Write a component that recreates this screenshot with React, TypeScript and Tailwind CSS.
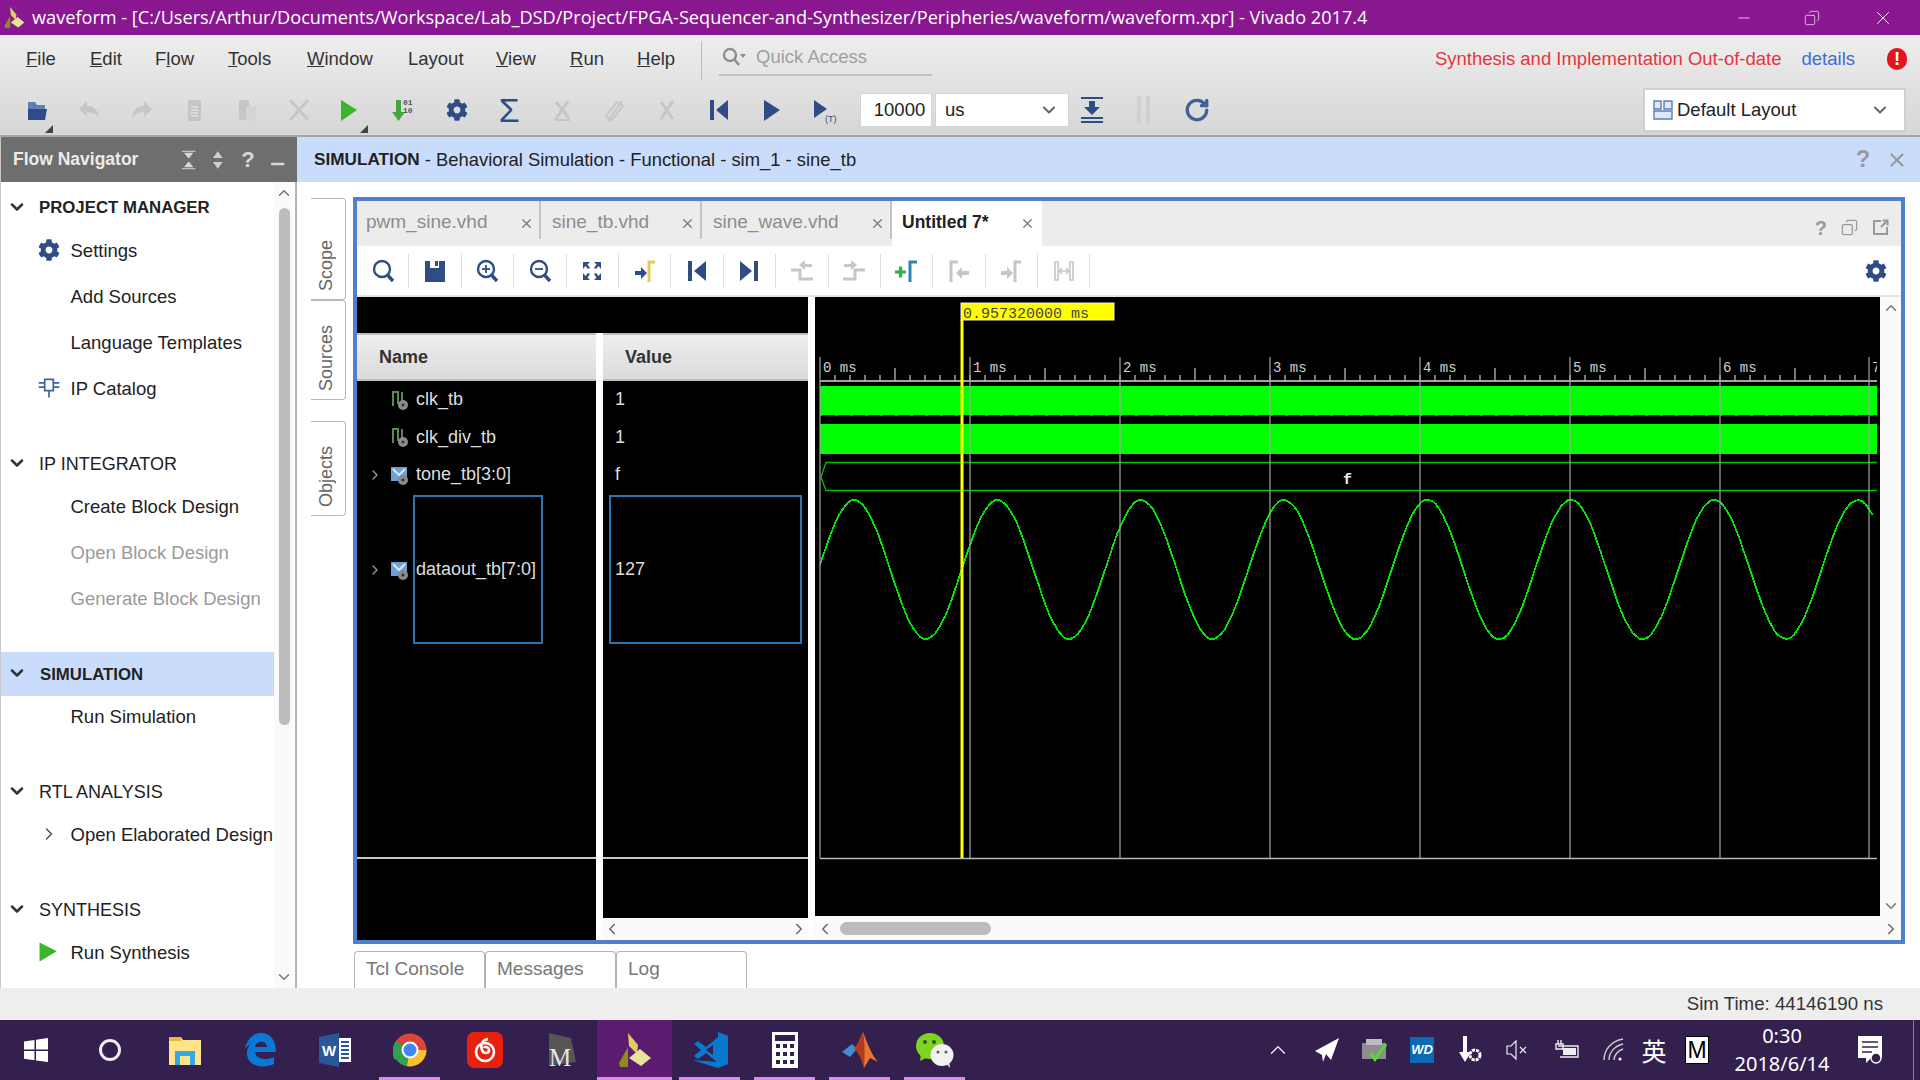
import React from "react";
import { ChevronDown, ChevronLeft, ChevronRight, ChevronUp, Minus, RotateCw, X, Copy } from "lucide-react";
import { FaCog } from "react-icons/fa";

const NAVY = "#2f4d85";
const FAINT = "#c6c6c6";

type IconProps = { children: React.ReactNode; size?: number };

function Ico({ children, size = 28 }: Readonly<IconProps>) {
  return (
    <svg width={size} height={size} viewBox="0 0 28 28" className="shrink-0">
      {children}
    </svg>
  );
}

const FirstFrame = () => (
  <Ico>
    <rect x="5" y="4" width="4" height="20" fill={NAVY} />
    <path d="M23 4 L11 14 L23 24 Z" fill={NAVY} />
  </Ico>
);
const LastFrame = () => (
  <Ico>
    <rect x="19" y="4" width="4" height="20" fill={NAVY} />
    <path d="M5 4 L17 14 L5 24 Z" fill={NAVY} />
  </Ico>
);
const Magnifier = ({ sign }: { sign?: "+" | "-" }) => (
  <Ico>
    <circle cx="13" cy="12" r="8" fill="none" stroke={NAVY} strokeWidth="2.4" />
    <path d="M18.5 18 L24 24" stroke={NAVY} strokeWidth="3.4" />
    {sign && <path d="M9 12 H17" stroke={NAVY} strokeWidth="1.8" />}
    {sign === "+" && <path d="M13 8 V16" stroke={NAVY} strokeWidth="1.8" />}
  </Ico>
);

const mainTools: React.ReactNode[] = [
  <Ico key="open">
    <path d="M5 6 H12 L14 9 H22 V23 H5 Z" fill="#5d7fb5" />
    <path d="M5 13 H24 L22 24 H5 Z" fill={NAVY} />
  </Ico>,
  <Ico key="undo">
    <path d="M4 13 L12 5 V10 C19 10 23 14 24 22 C21 18 17 16 12 16 V21 Z" fill={FAINT} />
  </Ico>,
  <Ico key="redo">
    <path d="M24 13 L16 5 V10 C9 10 5 14 4 22 C7 18 11 16 16 16 V21 Z" fill={FAINT} />
  </Ico>,
  <Ico key="copy">
    <rect x="8" y="4" width="13" height="21" fill={FAINT} />
    <path d="M11 11 H18 M11 14 H18 M11 17 H18 M11 20 H18" stroke="#eee" strokeWidth="1" />
  </Ico>,
  <Ico key="paste">
    <rect x="6" y="4" width="10" height="20" fill={FAINT} />
    <rect x="13" y="10" width="10" height="15" fill="#d4d4d4" />
  </Ico>,
  <Ico key="cut">
    <path d="M5 4 L23 24 M23 4 L5 24" stroke={FAINT} strokeWidth="3" />
  </Ico>,
  <Ico key="run">
    <path d="M3 4 L19 14 L3 25 Z" fill="#3bb52b" />
  </Ico>,
  <Ico key="bitstream">
    <path d="M6 4 H11 V16 H15 L8.5 25 L2 16 H6 Z" fill="#47a53f" />
    <text x="13" y="9" fontSize="8" fontFamily="Liberation Mono" fontWeight="700" fill="#555">01</text>
    <text x="13" y="17" fontSize="8" fontFamily="Liberation Mono" fontWeight="700" fill="#555">10</text>
  </Ico>,
  <FaCog key="cog" size={22} color={NAVY} />,
  <span key="sigma" className="text-[34px] leading-none font-['Liberation_Sans'] text-[#2f4d85]">Σ</span>,
  <Ico key="x1">
    <path d="M8 6 L21 22 M20 5 L8 23" stroke={FAINT} strokeWidth="3" />
    <path d="M6 24 H22" stroke={FAINT} strokeWidth="2" />
  </Ico>,
  <Ico key="x2">
    <path d="M6 20 L17 6 L23 10 L12 24 Z" fill="none" stroke={FAINT} strokeWidth="2" />
    <path d="M8 25 L22 5" stroke={FAINT} strokeWidth="2" />
  </Ico>,
  <Ico key="x3">
    <path d="M8 6 L20 23 M20 5 L8 23" stroke={FAINT} strokeWidth="3" />
  </Ico>,
  <FirstFrame key="first" />,
  <Ico key="play">
    <path d="M6 4 L22 14 L6 25 Z" fill={NAVY} />
  </Ico>,
  <Ico key="playT">
    <path d="M4 4 L17 13 L4 22 Z" fill={NAVY} />
    <text x="15" y="26" fontSize="9" fontFamily="Liberation Sans" fill={NAVY}>(T)</text>
  </Ico>,
];

const waveTools: React.ReactNode[] = [
  <Magnifier key="search" />,
  <Ico key="save">
    <path d="M4 4 H9 V11 H18 V4 H24 V25 H4 Z" fill={NAVY} />
    <rect x="14" y="4" width="3" height="5" fill={NAVY} />
  </Ico>,
  <Magnifier key="zin" sign="+" />,
  <Magnifier key="zout" sign="-" />,
  <Ico key="fit">
    <path d="M5 5 H12 L9.5 7.5 L12 11 L10 12 L7.5 9 L5 12 Z M23 5 H16 L18.5 7.5 L16 11 L18 12 L20.5 9 L23 12 Z M5 23 H12 L9.5 20.5 L12 17 L10 16 L7.5 19 L5 16 Z M23 23 H16 L18.5 20.5 L16 17 L18 16 L20.5 19 L23 16 Z" fill={NAVY} />
  </Ico>,
  <Ico key="cursor">
    <path d="M18 25 V5 H24" fill="none" stroke="#e4c95a" strokeWidth="3" />
    <path d="M4 14 H10 V10 L16 16 L10 22 V18 H4 Z" fill={NAVY} />
  </Ico>,
  <FirstFrame key="first" />,
  <LastFrame key="last" />,
  <Ico key="prev">
    <path d="M3 13 H12 V22 H25" fill="none" stroke={FAINT} strokeWidth="3" />
    <path d="M24 7 H17 V3 L11 8 L17 13 V10 H24 Z" fill={FAINT} />
  </Ico>,
  <Ico key="next">
    <path d="M3 22 H15 V13 H25" fill="none" stroke={FAINT} strokeWidth="3" />
    <path d="M4 7 H11 V3 L17 8 L11 13 V10 H4 Z" fill={FAINT} />
  </Ico>,
  <Ico key="add">
    <path d="M17 25 V5 H24" fill="none" stroke="#2d83b8" strokeWidth="3" />
    <path d="M2 15 H13 M7.5 9.5 V20.5" stroke="#2fb14a" strokeWidth="3.2" />
  </Ico>,
  <Ico key="mprev">
    <path d="M6 25 V5 H13" fill="none" stroke={FAINT} strokeWidth="3" />
    <path d="M24 14 H17 V10 L11 16 L17 22 V18 H24 Z" fill={FAINT} />
  </Ico>,
  <Ico key="mnext">
    <path d="M18 25 V5 H24" fill="none" stroke={FAINT} strokeWidth="3" />
    <path d="M4 14 H10 V10 L16 16 L10 22 V18 H4 Z" fill={FAINT} />
  </Ico>,
  <Ico key="swap">
    <path d="M5 5 H8 V23 H5 Z M20 5 H23 V23 H20 Z M9 14 H19 M12 11 L9 14 L12 17 M16 11 L19 14 L16 17" fill="none" stroke={FAINT} strokeWidth="1.6" />
  </Ico>,
];

const menus = [
  { key: "File", w: "w-[64px]", label: <><u>F</u>ile</> },
  { key: "Edit", w: "w-[65px]", label: <><u>E</u>dit</> },
  { key: "Flow", w: "w-[73px]", label: <>F<u>l</u>ow</> },
  { key: "Tools", w: "w-[79px]", label: <><u>T</u>ools</> },
  { key: "Window", w: "w-[101px]", label: <><u>W</u>indow</> },
  { key: "Layout", w: "w-[88px]", label: <>Layout</> },
  { key: "View", w: "w-[74px]", label: <><u>V</u>iew</> },
  { key: "Run", w: "w-[67px]", label: <><u>R</u>un</> },
  { key: "Help", w: "w-[64px]", label: <><u>H</u>elp</> },
];

type NavItem = { label: string; icon?: React.ReactNode; disabled?: boolean };
type NavGroup = { title: string; bold?: boolean; active?: boolean; items: NavItem[] };

const navGroups: NavGroup[] = [
  {
    title: "PROJECT MANAGER",
    bold: true,
    items: [
      { label: "Settings", icon: <FaCog size={22} color={NAVY} /> },
      { label: "Add Sources" },
      { label: "Language Templates" },
      {
        label: "IP Catalog",
        icon: (
          <Ico size={24}>
            <path d="M9 4 H19 V17 H9 Z M14 17 V25 M2 8 H9 M2 13 H9 M19 8 H26 M19 13 H26" fill="none" stroke="#3f639c" strokeWidth="2" />
          </Ico>
        ),
      },
    ],
  },
  {
    title: "IP INTEGRATOR",
    items: [
      { label: "Create Block Design" },
      { label: "Open Block Design", disabled: true },
      { label: "Generate Block Design", disabled: true },
    ],
  },
  { title: "SIMULATION", bold: true, active: true, items: [{ label: "Run Simulation" }] },
  {
    title: "RTL ANALYSIS",
    items: [{ label: "Open Elaborated Design", icon: <ChevronRight size={20} strokeWidth={1.5} color="#444" /> }],
  },
  {
    title: "SYNTHESIS",
    items: [
      {
        label: "Run Synthesis",
        icon: (
          <Ico size={24}>
            <path d="M3 3 L23 13 L3 25 Z" fill="#3bb52b" />
          </Ico>
        ),
      },
    ],
  },
];

function FlowNavigator() {
  return (
    <div className="w-[297px] shrink-0 flex flex-col border-l border-[#c8c8c8]">
      <div className="h-[45px] bg-[#6e6e6e] flex items-center pl-[12px] pr-[10px] text-[#ececec]">
        <span className="font-bold text-[17.5px] w-[165px]">Flow Navigator</span>
        <svg width="18" height="20" viewBox="0 0 18 20" className="ml-[8px]">
          <path d="M2 1 H16 M2 19 H16 M5 3 H13 L9 8 Z M5 17 H13 L9 12 Z" stroke="#d8d8d8" fill="#d8d8d8" />
        </svg>
        <svg width="14" height="20" viewBox="0 0 14 20" className="ml-[13px]">
          <path d="M2 8 L7 1 L12 8 Z M2 12 L7 19 L12 12 Z" fill="#d0d0d0" />
        </svg>
        <span className="ml-[17px] text-[22px] font-bold text-[#d8d8d8]">?</span>
        <Minus size={20} strokeWidth={3} color="#d8d8d8" className="ml-[13px] mt-[8px]" />
      </div>
      <div className="flex-1 flex bg-white border-r-2 border-[#b4b4b4]">
        <div className="w-[273px] pt-[4px] overflow-hidden">
          {navGroups.map((group) => (
            <div key={group.title} className="pb-[32px] last:pb-0">
              <div className={`h-[44px] flex items-center pl-[6px] ${group.active ? "bg-[#c9dcfc]" : ""}`}>
                <ChevronDown size={20} strokeWidth={3} color="#333" className="-mt-[3px]" />
                <span className={`ml-[12px] text-[#222] ${group.bold ? "font-bold text-[16.8px]" : "text-[18px]"} ${group.active ? "pl-[1px] mt-[2px]" : ""}`}>
                  {group.title}
                </span>
              </div>
              <div className="flex flex-col gap-[4px]">
                {group.items.map((item) => (
                  <div key={item.label} className="h-[42px] flex items-center">
                    <span className="w-[69.5px] shrink-0 flex justify-center pl-[27px] -mt-[3px]">{item.icon}</span>
                    <span className={`text-[18.5px] whitespace-nowrap ${item.disabled ? "text-[#9a9a9a]" : "text-[#222]"}`}>
                      {item.label}
                    </span>
                  </div>
                ))}
              </div>
            </div>
          ))}
        </div>
        <div className="w-[20px] bg-[#fafafa] flex flex-col items-center py-[2px]">
          <ChevronUp size={18} strokeWidth={2} color="#777" />
          <div className="w-[11px] h-[517px] mt-[6px] rounded-full bg-[#bcbcbc]" />
          <ChevronDown size={18} strokeWidth={2} color="#777" className="mt-auto" />
        </div>
      </div>
    </div>
  );
}

function SideTab({ label, h }: Readonly<{ label: string; h: string }>) {
  return (
    <div className={`${h} w-[35px] border border-l-0 border-[#b8b8b8] rounded-r-[4px] flex flex-col items-center justify-end pb-[8px] pr-[4px]`}>
      <span className="[writing-mode:vertical-rl] rotate-180 text-[18px] text-[#666]">{label}</span>
    </div>
  );
}

const fileTabs = [
  { name: "pwm_sine.vhd", w: "w-[184px]", pad: "pl-[9px]" },
  { name: "sine_tb.vhd", w: "w-[161px]", pad: "pl-[11px]" },
  { name: "sine_wave.vhd", w: "w-[190px]", pad: "pl-[11px]" },
];

function WaveIcon({ bus }: Readonly<{ bus?: boolean }>) {
  return (
    <svg width="20" height="22" viewBox="0 0 20 22" className="shrink-0">
      {bus ? (
        <path d="M1 3 H17 V17 H1 Z" fill="#6f9fd8" />
      ) : (
        <path d="M3 17 V3 H8 V15 M12 15 V3" fill="none" stroke="#5a8a52" strokeWidth="2" />
      )}
      {bus && <path d="M3 5 L9 11 L15 5" stroke="#dbe8f8" strokeWidth="2" fill="none" />}
      <circle cx="13" cy="16" r="5" fill="#8b8b8b" />
      <circle cx="13" cy="16" r="1.5" fill="#333" />
    </svg>
  );
}

function RowLead({ bus }: Readonly<{ bus?: boolean }>) {
  return (
    <>
      <span className="w-[26px] shrink-0 flex justify-end">
        {bus && <ChevronRight size={16} color="#999" />}
      </span>
      <span className="w-[7px] shrink-0" />
      <WaveIcon bus={bus} />
    </>
  );
}

function SignalRow({ name, bus }: Readonly<{ name: string; bus?: boolean }>) {
  return (
    <div className="h-[37.5px] flex items-center text-[18px] text-[#dedede]">
      <RowLead bus={bus} />
      <span className="pl-[6px]">{name}</span>
    </div>
  );
}

function ColumnHeader({ label }: Readonly<{ label: string }>) {
  return (
    <div className="h-[48px] pl-[22px] flex items-center font-bold text-[18px] text-[#333] bg-linear-to-b from-[#efefef] to-[#dadada] border-t-2 border-b-2 border-[#bdbdbd]">
      {label}
    </div>
  );
}

// one period is 143.3 px, sampled coarsely so the curve keeps its stepped look
function sinePoints() {
  const pts: string[] = [];
  for (let x = 820; x <= 1873; x += 3.58) {
    const y = 570.5 - 69.5 * Math.sin((2 * Math.PI * (x - 818.5)) / 143.3);
    pts.push(`${x.toFixed(1)},${Math.round(y)}`);
  }
  return pts.join(" ");
}

const MS_X = [820, 970, 1120, 1270, 1420, 1570, 1720, 1869];
const MONO = "'Liberation Mono', monospace";

function WavePlot() {
  const ticks: number[] = [];
  for (let x = 835; x < 1870; x += 15) ticks.push(x);
  return (
    <svg viewBox="815 298 1065 619" width="1065" height="619" className="block bg-black">
      <path d="M820 382 H1877" stroke="#d8d8d8" strokeWidth="1.5" />
      {ticks.map((x) => (
        <path
          key={x}
          d={`M${x} ${(x - 820) % 75 === 0 && (x - 820) % 150 !== 0 ? 369 : 376} V382`}
          stroke="#c8c8c8"
          strokeWidth="1.2"
        />
      ))}
      {MS_X.map((x, i) => (
        <text key={x} x={x + 3} y={373} fontFamily={MONO} fontSize="14" fill="#d0d0d0">
          {i === 7 ? "7" : `${i} ms`}
        </text>
      ))}
      <rect x="1877" y="298" width="3" height="619" fill="#000" />
      <rect x="820" y="387" width="1057" height="29" fill="#00ff00" />
      <path d="M820 416.5 H1877" stroke="#00b000" strokeWidth="1" strokeDasharray="3 12" />
      <rect x="820" y="425" width="1057" height="30" fill="#00ff00" />
      <path d="M1877 463.5 H826 L821 478 L826 491.5 H1877" fill="none" stroke="#00c400" strokeWidth="1.3" />
      <text x="1343" y="485" fontFamily={MONO} fontSize="15" fontWeight="700" fill="#eee">f</text>
      <polyline points={sinePoints()} fill="none" stroke="#00e600" strokeWidth="1.8" shapeRendering="crispEdges" />
      {MS_X.map((x) => (
        <path key={x} d={`M${x} 358 V859`} stroke="#a4a4a4" strokeWidth="1.2" />
      ))}
      <path d="M820 859.5 H1877" stroke="#b8b8b8" strokeWidth="1.5" />
      <path d="M962 321 V859" stroke="#ffff00" strokeWidth="3" />
      <rect x="961" y="304" width="153" height="17" fill="#ffff00" stroke="#eee" />
      <text x="963" y="319" fontFamily={MONO} fontSize="15" fill="#444">0.957320000 ms</text>
    </svg>
  );
}

function WaveformPanel() {
  return (
    <div className="w-[1552px] h-[747px] border-4 border-[#4f7fcf] flex flex-col">
      <div className="h-[45px] bg-[#ececec] flex text-[19px]">
        {fileTabs.map((tab) => (
          <div key={tab.name} className={`${tab.w} flex items-start`}>
            <div className={`h-[38px] flex-1 flex items-center justify-between ${tab.pad} pr-[5px] pt-[4px] border-r-2 border-[#c4c4c4] text-[#8c8c8c]`}>
              <span>{tab.name}</span>
              <X size={15} color="#777" className="mt-[3px]" />
            </div>
          </div>
        ))}
        <div className="w-[150px] bg-white flex items-center justify-between pl-[10px] pr-[7px] pb-[3px] text-[#222]">
          <span className="font-bold text-[17.5px]">Untitled 7*</span>
          <X size={15} color="#777" className="mt-[3px]" />
        </div>
        <div className="ml-auto flex items-center gap-[14px] pr-[12px] pt-[8px] text-[#9a9a9a]">
          <span className="font-bold text-[20px]">?</span>
          <Copy size={17} strokeWidth={1.8} className="-scale-x-100" />
          <svg width="17" height="17" viewBox="0 0 17 17" fill="none" stroke="#9a9a9a" strokeWidth="2">
            <path d="M9 2 H2 V15 H15 V8 M9 8 L15 2 M10.5 1.5 H15.5 V6.5" />
          </svg>
        </div>
      </div>
      <div className="h-[51px] bg-white flex items-center border-b-2 border-[#e4e4e4]">
        {waveTools.map((icon, i) => (
          <div key={i} className="w-[52.4px] h-[34px] flex items-center justify-center border-r border-[#e0e0e0]">
            {icon}
          </div>
        ))}
        <FaCog size={22} color={NAVY} className="ml-auto mr-[14px]" />
      </div>
      <div className="flex-1 flex bg-white min-h-0">
        <div className="w-[239px] bg-black flex flex-col">
          <div className="h-[36px]" />
          <ColumnHeader label="Name" />
          <SignalRow name="clk_tb" />
          <SignalRow name="clk_div_tb" />
          <SignalRow name="tone_tb[3:0]" bus />
          <div className="h-[150px] mt-[1px] flex items-center text-[18px] text-[#dedede]">
            <RowLead bus />
            <div className="w-[130px] h-[149px] ml-[3px] border-2 border-[#2a74b0] flex items-center pl-[1px] whitespace-nowrap">
              dataout_tb[7:0]
            </div>
          </div>
          <div className="h-[215px] border-b-2 border-[#c8c8c8] -mt-[1px]" />
        </div>
        <div className="w-[7px] shrink-0">
          <div className="h-[36px] bg-black" />
        </div>
        <div className="w-[205px] flex flex-col">
          <div className="h-[621px] bg-black flex flex-col">
            <div className="h-[36px]" />
            <ColumnHeader label="Value" />
            <div className="h-[37.5px] flex items-center pl-[12px] text-[18px] text-[#dedede]">1</div>
            <div className="h-[37.5px] flex items-center pl-[12px] text-[18px] text-[#dedede]">1</div>
            <div className="h-[37.5px] flex items-center pl-[12px] text-[18px] text-[#dedede]">f</div>
            <div className="w-[193px] h-[149px] ml-[6px] mt-[1px] border-2 border-[#2a74b0] flex items-center pl-[4px] text-[18px] text-[#dedede]">
              127
            </div>
            <div className="h-[215px] border-b-2 border-[#c8c8c8]" />
          </div>
          <div className="flex-1 bg-[#fafafa] flex items-center justify-between">
            <ChevronLeft size={18} color="#666" />
            <ChevronRight size={18} color="#666" />
          </div>
        </div>
        <div className="flex-1 ml-[7px] flex flex-col min-w-0">
          <div className="flex-1 flex min-h-0">
            <WavePlot />
            <div className="flex-1 bg-[#fafafa] flex flex-col items-center justify-between py-[2px]">
              <ChevronUp size={18} color="#777" />
              <ChevronDown size={18} color="#777" />
            </div>
          </div>
          <div className="h-[23px] bg-[#fafafa] flex items-center px-[1px]">
            <ChevronLeft size={18} color="#666" />
            <div className="w-[151px] h-[13px] ml-[6px] rounded-full bg-[#bcbcbc]" />
            <ChevronRight size={18} color="#666" className="ml-auto" />
          </div>
        </div>
      </div>
    </div>
  );
}

function Chrome() {
  return (
    <svg width="34" height="34" viewBox="0 0 34 34">
      <circle cx="17" cy="17" r="16.5" fill="#db4437" />
      <path d="M17 17 L2 27 A16.5 16.5 0 0 1 3 8 Z" fill="#32a050" />
      <path d="M17 17 L2.5 25 A16.5 16.5 0 0 0 17 33.5 Z" fill="#32a050" />
      <path d="M17 17 H33.5 A16.5 16.5 0 0 1 14 33 Z" fill="#fbc02d" />
      <circle cx="17" cy="17" r="8.5" fill="#fff" />
      <circle cx="17" cy="17" r="6.5" fill="#4285f4" />
    </svg>
  );
}

function VivadoLogo({ w, h }: Readonly<{ w: number; h: number }>) {
  return (
    <svg width={w} height={h} viewBox="0 0 32 34">
      <path d="M9 0 L19 12 L18 21 L10 13 Z" fill="#d9d05f" />
      <path d="M9 14 L9 34 L1 34 L0 30 Z" fill="#8f8c1e" />
      <path d="M10 25 L21 16 L32 25 L22 33 Z" fill="#e6e49a" />
    </svg>
  );
}

const taskApps: { key: string; active?: boolean; open?: boolean; icon: React.ReactNode }[] = [
  {
    key: "explorer",
    icon: (
      <svg width="32" height="30" viewBox="0 0 32 30">
        <path d="M0 2 H12 L14 5 H32 V30 H0 Z" fill="#ffe38b" />
        <rect x="0" y="2" width="12" height="4" fill="#e8b93d" />
        <path d="M6 30 V16 H26 V30 H21 V21 H11 V30 Z" fill="#35a8e0" />
      </svg>
    ),
  },
  {
    key: "edge",
    icon: (
      <svg width="32" height="34" viewBox="0 0 32 34">
        <path d="M1 16 C3 5 10 0 17 0 C26 0 32 7 32 19 H11 C12 26 21 28 30 24 V31 C20 36 3 34 3 20 C3 14 7 9 12 7 C8 9 4 12 1 16 Z M11 14 H23 C23 7 12 7 11 14 Z" fill="#0a78d7" fillRule="evenodd" />
      </svg>
    ),
  },
  {
    key: "word",
    icon: (
      <svg width="32" height="34" viewBox="0 0 32 34">
        <path d="M0 4 L20 0 V34 L0 30 Z" fill="#2b579a" />
        <rect x="20" y="5" width="12" height="24" fill="#fff" />
        <path d="M22 9 H30 M22 13 H30 M22 17 H30 M22 21 H30 M22 25 H30" stroke="#2b579a" strokeWidth="1.8" />
        <text x="3" y="23" fontFamily="Liberation Sans" fontSize="15" fontWeight="700" fill="#fff">W</text>
      </svg>
    ),
  },
  { key: "chrome", open: true, icon: <Chrome /> },
  {
    key: "netease",
    icon: (
      <svg width="36" height="36" viewBox="0 0 36 36">
        <rect width="36" height="36" rx="7" fill="#e8210f" />
        <circle cx="18" cy="20" r="9" fill="none" stroke="#fff" strokeWidth="2.6" />
        <path d="M21 7 C15 8 13 13 15 18 C16 22 22 22 22 18 C22 15 18 14 17 16" fill="none" stroke="#fff" strokeWidth="2.6" />
      </svg>
    ),
  },
  {
    key: "mendeley",
    icon: (
      <svg width="34" height="36" viewBox="0 0 34 36">
        <path d="M6 1 L28 6 L33 30 L6 34 Z" fill="#555" />
        <text x="6" y="34" fontFamily="Liberation Serif" fontSize="25" fill="#e6e6e6">M</text>
      </svg>
    ),
  },
  { key: "vivado", active: true, open: true, icon: <VivadoLogo w={32} h={34} /> },
  {
    key: "vscode",
    open: true,
    icon: (
      <svg width="36" height="36" viewBox="0 0 36 36">
        <path d="M26 0 L36 4 V32 L26 36 L0 28 L26 30 Z" fill="#0b78cf" />
        <path d="M2 12 L6 9 L14 15 L26 5 V31 L14 21 L6 27 L2 24 L9 18 Z M14 18 L21 23 V13 Z" fill="#0b78cf" fillRule="evenodd" />
      </svg>
    ),
  },
  {
    key: "calc",
    open: true,
    icon: (
      <svg width="26" height="36" viewBox="0 0 26 36">
        <rect width="26" height="36" fill="#fff" />
        <rect x="3" y="3" width="20" height="6" fill="#33204f" />
        <path d="M4 12 H8 V16 H4 Z M11 12 H15 V16 H11 Z M18 12 H22 V16 H18 Z M4 20 H8 V24 H4 Z M11 20 H15 V24 H11 Z M18 20 H22 V24 H18 Z M4 28 H8 V32 H4 Z M11 28 H15 V32 H11 Z M18 28 H22 V32 H18 Z" fill="#33204f" />
      </svg>
    ),
  },
  {
    key: "matlab",
    open: true,
    icon: (
      <svg width="36" height="36" viewBox="0 0 36 36">
        <path d="M0 20 L10 12 L15 17 L8 25 Z" fill="#3d8fd1" />
        <path d="M21 0 C24 8 30 24 36 30 L28 26 L22 36 C20 28 18 22 12 16 C16 14 18 6 21 0 Z" fill="#e8762c" />
        <path d="M21 0 C18 6 16 14 12 16 C18 22 20 28 22 36 C23 24 23 10 21 0 Z" fill="#b23a1e" />
      </svg>
    ),
  },
  {
    key: "wechat",
    open: true,
    icon: (
      <svg width="38" height="36" viewBox="0 0 38 36">
        <ellipse cx="14" cy="14" rx="14" ry="13" fill="#7fd321" />
        <path d="M5 22 L4 29 L12 25 Z" fill="#7fd321" />
        <ellipse cx="26" cy="23" rx="11.5" ry="11" fill="#f2f2f2" />
        <path d="M30 31 L34 36 L33 28 Z" fill="#f2f2f2" />
        <circle cx="9" cy="10" r="2" fill="#2c5a10" />
        <circle cx="18" cy="10" r="2" fill="#2c5a10" />
        <circle cx="22" cy="20" r="1.6" fill="#666" />
        <circle cx="30" cy="20" r="1.6" fill="#666" />
      </svg>
    ),
  },
];

function Taskbar() {
  return (
    <div className="h-[60px] shrink-0 bg-[#33204f] flex text-white">
      <div className="w-[72px] flex items-center justify-center">
        <svg width="24" height="24" viewBox="0 0 24 24">
          <path d="M0 3.5 L10.5 2 V11.5 H0 Z M12 1.8 L24 0 V11.5 H12 Z M0 13 H10.5 V22.2 L0 20.7 Z M12 13 H24 V24 L12 22.4 Z" fill="#fff" />
        </svg>
      </div>
      <div className="w-[75px] flex items-center justify-center">
        <div className="w-[22px] h-[22px] rounded-full border-[3px] border-[#eee]" />
      </div>
      {taskApps.map((app) => (
        <div key={app.key} className={`relative w-[75px] flex items-center justify-center ${app.active ? "bg-[#5b1c70]" : ""}`}>
          {app.icon}
          {app.open && (
            <div className={`absolute bottom-0 h-[3px] bg-[#d88de8] ${app.active ? "inset-x-0" : "inset-x-[7px]"}`} />
          )}
        </div>
      ))}
      <SystemTray />
    </div>
  );
}

function SystemTray() {
  return (
    <div className="flex-1 flex items-center justify-end pr-[6px]">
      <ChevronUp size={26} strokeWidth={1.2} color="#eee" className="mr-[24px]" />
      <svg width="24" height="24" viewBox="0 0 24 24" className="mr-[22px]">
        <path d="M0 13 L24 0 L16 22 L11 16 L8 24 L7 17 Z" fill="#fff" />
      </svg>
      <svg width="26" height="24" viewBox="0 0 26 24" className="mr-[23px]">
        <rect x="1" y="5" width="24" height="16" fill="#8d8d8d" />
        <rect x="5" y="1" width="16" height="6" fill="#bdbdbd" />
        <path d="M10 15 L14 21 L25 6" stroke="#5ed13c" strokeWidth="3.5" fill="none" />
      </svg>
      <div className="w-[24px] h-[26px] bg-[#0d69b3] flex items-center justify-center mr-[24px] font-bold italic text-[13px] font-['Liberation_Sans']">
        WD
      </div>
      <svg width="24" height="28" viewBox="0 0 24 28" className="mr-[23px]">
        <path d="M5 0 H9 V16 H13 L7 26 L1 16 H5 Z" fill="#fff" />
        <circle cx="17" cy="19" r="5" fill="none" stroke="#fff" strokeWidth="3" strokeDasharray="3 1" />
      </svg>
      <svg width="24" height="24" viewBox="0 0 24 24" className="mr-[24px]" fill="none" stroke="#eee" strokeWidth="1.2">
        <path d="M2 8 H6 L11 3 V21 L6 16 H2 Z M15 9 L21 15 M21 9 L15 15" />
      </svg>
      <svg width="26" height="22" viewBox="0 0 26 22" className="mr-[24px]" fill="none" stroke="#eee" strokeWidth="1.4">
        <path d="M5 7 H25 V18 H7 M5 1 V5 M8 1 V5 M3 5 H10 V10 H3 Z" />
        <rect x="10" y="9" width="13" height="7" fill="#eee" stroke="none" />
      </svg>
      <svg width="24" height="24" viewBox="0 0 24 24" className="mr-[13px]" fill="none" stroke="#ccc" strokeWidth="1.4">
        <path d="M1 22 C1 12 8 3 20 1 M6 22 C6 15 11 8 20 6 M11 22 C11 18 14 13 20 11" />
        <circle cx="17" cy="21" r="1.6" fill="#fff" stroke="none" />
      </svg>
      <span className="w-[28px] text-center text-[25px] leading-none font-['Noto_Sans_CJK_SC',sans-serif] mr-[17px]">英</span>
      <div className="w-[24px] h-[28px] bg-white border border-black flex items-center justify-center text-black text-[23px] leading-none font-['Liberation_Sans'] mr-[25px]">
        M
      </div>
      <div className="w-[96px] flex flex-col items-center text-[20px] leading-[28px] mr-[27px] font-['Noto_Sans',sans-serif]">
        <span>0:30</span>
        <span className="whitespace-nowrap">2018/6/14</span>
      </div>
      <svg width="26" height="30" viewBox="0 0 26 30" className="mr-[30px]">
        <path d="M1 1 H25 V23 H14 L9 28 V23 H1 Z" fill="#fff" />
        <path d="M5 7 H21 M5 12 H21 M5 17 H15" stroke="#33204f" strokeWidth="1.6" />
        <circle cx="19" cy="23" r="5" fill="#33204f" stroke="#fff" strokeWidth="1.4" />
      </svg>
      <div className="w-px h-full bg-[#8a7a9c]" />
    </div>
  );
}

export default function App() {
  return (
    <div className="w-[1920px] h-[1080px] flex flex-col overflow-hidden bg-white font-['Liberation_Sans',Arial,sans-serif]">
      {/* title bar */}
      <div className="h-[35px] shrink-0 bg-[#89178f] flex items-center pl-[3px] text-white">
        <VivadoLogo w={23} h={21} />
        <span className="ml-[6px] text-[18.15px] font-['Open_Sans',sans-serif] whitespace-nowrap">
          waveform - [C:/Users/Arthur/Documents/Workspace/Lab_DSD/Project/FPGA-Sequencer-and-Synthesizer/Peripheries/waveform/waveform.xpr] - Vivado 2017.4
        </span>
        <Minus size={18} strokeWidth={1} className="ml-auto mr-[51px]" />
        <Copy size={16} strokeWidth={1} className="-scale-x-100 mr-[52px]" />
        <X size={22} strokeWidth={1} className="mr-[26px]" />
      </div>

      {/* menu and main toolbar */}
      <div className="h-[102px] shrink-0 bg-linear-to-b from-[#eeeeee] to-[#d6d6d6] border-b-2 border-[#a6a6a6]">
        <div className="h-[50px] flex items-center pl-[26px] pb-[3px] text-[18.5px] text-[#333]">
          {menus.map((m) => (
            <span key={m.key} className={m.w}>
              {m.label}
            </span>
          ))}
          <div className="w-px h-[40px] bg-[#bdbdbd] mt-[4px]" />
          <div className="w-[213px] h-[36px] ml-[17px] -mt-[2px] flex items-center border-b-2 border-[#c2c2c2] text-[#a0a0a0]">
            <svg width="26" height="20" viewBox="0 0 26 20" className="ml-[3px]">
              <circle cx="8" cy="8" r="6" fill="none" stroke="#8e8e8e" strokeWidth="2.4" />
              <path d="M12 12 L17 18" stroke="#8e8e8e" strokeWidth="2.6" />
              <path d="M18 7 H24 L21 11 Z" fill="#8e8e8e" />
            </svg>
            <span className="ml-[8px]">Quick Access</span>
          </div>
          <span className="ml-auto text-[#e8343e]">Synthesis and Implementation Out-of-date</span>
          <span className="ml-[20px] text-[#3d6be0]">details</span>
          <span className="ml-[32px] mr-[13px] w-[20px] h-[22px] rounded-full bg-[#e3141c] text-white font-bold flex items-center justify-center">
            !
          </span>
        </div>
        <div className="h-[50px] flex items-center pl-[11px]">
          {mainTools.map((icon, i) => (
            <div key={i} className="relative w-[52.5px] h-[34px] flex items-center justify-center border-r border-[#dcdcdc]">
              {icon}
              {(i === 0 || i === 6) && (
                <div className="absolute right-[10px] bottom-[-6px] w-0 h-0 border-l-[8px] border-l-transparent border-b-[8px] border-b-[#444]" />
              )}
            </div>
          ))}
          <div className="w-[72px] h-[34px] ml-[9px] pl-[7px] bg-white border border-[#d4d4d4] flex items-center justify-center text-[18.5px] text-[#222]">
            10000
          </div>
          <div className="w-[134px] h-[34px] ml-[3px] bg-white border border-[#d4d4d4] flex items-center justify-between pl-[9px] pr-[9px] text-[18.5px] text-[#222]">
            us
            <ChevronDown size={20} strokeWidth={2.5} color="#666" />
          </div>
          <div className="w-[46px] flex justify-center">
            <svg width="24" height="28" viewBox="0 0 24 28">
              <path d="M1 2 H23 M1 22 H23 M1 26 H23" stroke={NAVY} strokeWidth="2" />
              <path d="M9 5 H15 V11 H20 L12 19 L4 11 H9 Z" fill={NAVY} />
            </svg>
          </div>
          <div className="w-[58px] flex justify-center">
            <svg width="16" height="30" viewBox="0 0 16 30">
              <rect x="1" y="1" width="4" height="28" fill="#d0d0d0" />
              <rect x="10" y="1" width="4" height="28" fill="#d0d0d0" />
            </svg>
          </div>
          <div className="w-[48px] flex justify-center">
            <RotateCw size={26} strokeWidth={3} color="#3f6296" />
          </div>
          <div className="w-[263px] h-[44px] ml-auto mr-[14px] bg-white border-2 border-[#d0d0d0] flex items-center pl-[8px] pr-[14px] text-[18.5px] text-[#222]">
            <svg width="20" height="20" viewBox="0 0 20 20" className="shrink-0">
              <path d="M1 1 H8 V9 H1 Z M11 1 H19 V9 H11 Z M1 11 H19 V19 H1 Z" fill="#dce8f6" stroke="#5b7fae" strokeWidth="1.4" />
            </svg>
            <span className="ml-[4px]">Default Layout</span>
            <ChevronDown size={20} strokeWidth={2.5} color="#666" className="ml-auto" />
          </div>
        </div>
      </div>

      {/* body */}
      <div className="flex-1 flex min-h-0">
        <FlowNavigator />
        <div className="flex-1 flex flex-col min-w-0">
          <div className="h-[45px] bg-[#c9dcfc] flex items-center pl-[17px] pr-[12px] text-[18.4px] text-[#222]">
            <span className="font-bold text-[17.2px]">SIMULATION</span>
            <span>&nbsp;- Behavioral Simulation - Functional - sim_1 - sine_tb</span>
            <span className="ml-auto text-[23px] font-bold text-[#999]">?</span>
            <X size={22} strokeWidth={2.4} color="#999" className="ml-[16px]" />
          </div>
          <div className="flex-1 flex pt-[15px] pl-[14px]">
            <div className="w-[35px] mr-[7px] flex flex-col pt-[1px]">
              <SideTab label="Scope" h="h-[102px]" />
              <SideTab label="Sources" h="h-[100px]" />
              <div className="h-[21px]" />
              <SideTab label="Objects" h="h-[95px]" />
            </div>
            <div className="flex flex-col">
              <WaveformPanel />
              <div className="flex mt-[7px] pl-[1px] h-[37px] text-[19px] text-[#777]">
                {["Tcl Console", "Messages", "Log"].map((t) => (
                  <div key={t} className="w-[131px] border border-b-0 border-[#b4b4b4] rounded-t-[4px] pl-[11px] pt-[3px]">
                    {t}
                  </div>
                ))}
              </div>
            </div>
          </div>
        </div>
      </div>

      {/* status bar */}
      <div className="h-[32px] shrink-0 bg-[#eeeeee] flex items-center justify-end pr-[37px] text-[18.7px] text-[#333]">
        Sim Time: 44146190 ns
      </div>
      <Taskbar />
    </div>
  );
}
